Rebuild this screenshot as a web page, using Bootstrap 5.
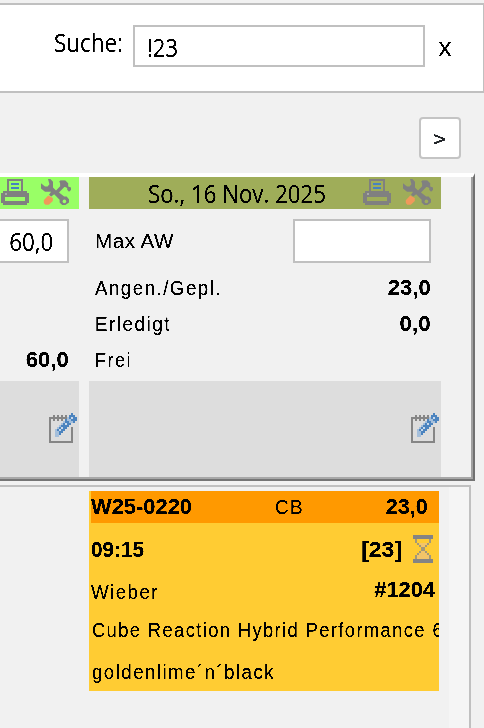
<!DOCTYPE html>
<html lang="de">
<head>
    <meta charset="UTF-8">
    <title>Werkstattplanung</title>
    <link href="https://cdn.jsdelivr.net/npm/bootstrap@5.3.0/dist/css/bootstrap.min.css" rel="stylesheet">
    <style>
        body { width: 484px; height: 728px; overflow: hidden; background: #f1f1f1; color: #000; font: 19.5px "Liberation Sans", sans-serif; }
        .search-bar { height: 90px; margin-top: 3px; background: #fff; border: 2px solid #c0c0c0; border-left: 0; border-right-width: 1px; padding: 20px 30px 0 54px; }
        .search-bar .label-box { width: 79px; }
        .field { background: #fff; border: 2px solid #c0c0c0; white-space: nowrap; }
        .search-field { width: 292px; height: 42px; line-height: 41px; padding-left: 12px; }
        .ui { font-family: "Open Sans", sans-serif; font-size: 25px; }
        .mono { font-family: "Liberation Mono", monospace; font-size: 26px; line-height: 48px; }
        .num { font-size: 22px; font-weight: 700; }
        .fit { display: inline-block; white-space: nowrap; transform-origin: left center; filter: url(#crisp); }
        .fit-end { transform-origin: right center; }
        .pager { height: 80px; padding: 24px 23px 0 0; }
        .next-btn { width: 42px; height: 42px; background: #fff; border: 2px solid #c4c4c4; border-radius: 4px; line-height: 40px; padding: 0; }
        .next-btn .fit { font: 22px/40px "DejaVu Sans Mono", monospace; }
        .planner { width: 475px; height: 308px; border-top: 4px solid #fff; border-right: 2px solid #707070; border-bottom: 2px solid #757575; }
        .planner-in { height: 302px; border-right: 2px solid #a0a0a0; border-bottom: 2px solid #a8a8a8; gap: 10px; }
        .day-prev { width: 79px; }
        .day { width: 352px; }
        .day-head { height: 32px; line-height: 32px; padding: 0 8px 0 1px; }
        .day-head svg { margin-top: 2px; }
        .day-title { width: 273px; padding-left: 58px; }
        .head-green { background: #9f6; color: #9f6; }
        .head-olive { background: #9fad59; color: #9fad59; }
        .head-olive .day-title { color: #000; }
        .aw-row { height: 44px; line-height: 44px; margin: 10px 10px 7px 0; }
        .day-prev .aw-row { line-height: 40px; padding-right: 14px; }
        .day .aw-row, .day .sum-row { padding-left: 6px; }
        .aw-field { width: 138px; }
        .sum-row { height: 36px; line-height: 36px; margin-right: 10px; }
        .notes { height: 96px; margin-top: 3px; background: #ddd; padding: 32px 2px 0 0; }
        .list-pane { width: 471px; height: 243px; margin-top: 4px; border-top: 2px solid #c0c0c0; border-right: 2px solid #c0c0c0; }
        .scroll-track { width: 20px; background: #f5f5f5; }
        .job { width: 350px; height: 200px; margin: 4px 10px 0 89px; background: #fc3; overflow: hidden; padding-left: 2px; }
        .job-head { height: 32px; line-height: 32px; background: #f90; padding-right: 11px; }
        .job-no { width: 184px; }
        .job-time { height: 52px; line-height: 53px; padding-right: 6px; }
        .job-time svg { margin-left: 11px; }
        .job-name { height: 34px; line-height: 35px; padding-right: 4px; }
        .job-name .num { line-height: 29px; }
        .job-line { height: 42px; line-height: 42px; padding-left: 1px; }
        svg { display: block; flex: none; }
    </style>
    <script src="https://cdn.jsdelivr.net/npm/bootstrap@5.3.0/dist/js/bootstrap.bundle.min.js"></script>
</head>
<body>
    <svg width="0" height="0" class="position-absolute">
        <!-- hard glyph edges, no smoothing -->
        <filter id="crisp" x="-5%" y="0" width="110%" height="100%">
            <feComponentTransfer><feFuncA type="linear" slope="6" intercept="-2"/></feComponentTransfer>
        </filter>
        <symbol id="printer" viewBox="0 0 14 13" shape-rendering="crispEdges">
            <path fill="#808080" fill-rule="evenodd" d="M3 0h8v6h2v1h1v5h-1v1H1v-1H0V7h1V6h2zM4 1v5h6V1zM2 9v2h10V9z"/>
            <path fill="#a8a8a8" d="M2 7h1v1H2z"/>
            <path fill="#4682c0" d="M5 2h4v1H5zM5 4h4v1H5z"/>
        </symbol>
        <symbol id="tools" viewBox="0 0 15 13">
            <path fill="#808080" d="M3.5 0h1.2L6 1.4v2.8l1.5 1.5L9.7 3.5V2.3L9 1.2 10 .9h2l1.6 1.6v1.2l1.4.6v1.2l-1 .9-.9-1v-.9l-1.3-.6-2.8 2.8 2.6 2.1h1.2l1.2 1.3v1.7L12.2 13h-1.6L9.3 11.8v-1.4L6.6 7.6 5.1 8.8 4 7.9l1-1.5H2L0 4.7V2.1l2 1.7h1.3l.9-1.2z"/>
            <path fill="#808080" d="M9.5.8h2.7l1.5 1.5-1.2 1.7-2.8-.2z"/>
            <path fill="#f0995a" d="M3.6 8.3 5.9 9.5V11L3.9 12.9H2.2L1.4 12v-1.4z"/>
            <circle cx="11.7" cy="11.2" r=".9" fill="currentColor"/>
        </symbol>
        <symbol id="notepad" viewBox="0 0 14 15" shape-rendering="crispEdges">
            <path fill="#858585" d="M0 2h1v12h10V7h1v8H0zM1 2h8v1H1z"/>
            <path fill="#858585" d="M2 1h1v3H2zM4 1h1v3H4zM6 1h1v3H6zM8 1h1v2H8z"/>
            <path fill="#a5bfdb" d="M3 8h1V7h1V6h1V5h1V4h1V3h1V2h2v1h1v2h-1v1h-1v1H9v1H8v1H7v1H6v1H5v1H3z"/>
            <path fill="#4c84bf" d="M11 0h1v1h1v1h1v2h-1v1h-1V4h-1V3h-1V1h1zM8 3h1v1h1v1h1v1h-1v1H9v1H8v1H7v1H6v1H5V9H4V8h1V7h1V6h1V5h1V4H8z"/>
            <path fill="#c9d9ea" d="M11 2h1v1h-1zM8 5h1v1H8zM6 7h1v1H6zM5 8h1v1H5z"/>
        </symbol>
        <symbol id="hourglass" viewBox="0 0 10 14" shape-rendering="crispEdges">
            <path fill="#f3c568" d="M2 4h6v1H7v1H6v2h1v1h1v3H2V9h1V8h1V6H3V5H2z"/>
            <path fill="#848484" d="M0 0h10v2H0zM0 12h10v2H0z"/>
            <path fill="#a2987a" d="M1 2h1v2H1zM8 2h1v2H8zM2 4h1v1H2zM7 4h1v1H7zM3 5h1v1H3zM6 5h1v1H6zM4 6h1v2H4zM6 6h-1v2h1zM3 8h1v1H3zM6 8h1v1H6zM2 9h1v1H2zM7 9h1v1H7zM1 10h1v2H1zM8 10h1v2H8z"/>
        </symbol>
    </svg>

    <div class="search-bar d-flex">
        <div class="label-box ui"><span class="fit" data-w="69">Suche:</span></div>
        <div class="field search-field ui"><span class="fit" data-w="31">!23</span></div>
        <div class="mono ms-auto"><span class="fit fit-end" data-w="15">x</span></div>
    </div>

    <div class="pager d-flex justify-content-end">
        <button class="next-btn btn"><span class="fit" data-w="13">&gt;</span></button>
    </div>

    <div class="planner">
        <div class="planner-in d-flex">
            <div class="day-prev">
                <div class="day-head head-green d-flex justify-content-between">
                    <svg width="28" height="26"><use href="#printer"/></svg>
                    <svg width="30" height="26"><use href="#tools"/></svg>
                </div>
                <div class="aw-row field ui text-end border-start-0"><span class="fit fit-end" data-w="44">60,0</span></div>
                <div class="sum-row"></div>
                <div class="sum-row"></div>
                <div class="sum-row num text-end"><span class="fit fit-end" data-w="43">60,0</span></div>
                <div class="notes d-flex justify-content-end"><svg width="28" height="30"><use href="#notepad"/></svg></div>
            </div>
            <div class="day">
                <div class="day-head head-olive d-flex">
                    <div class="day-title ui"><span class="fit" data-w="178">So., 16 Nov. 2025</span></div>
                    <svg width="28" height="26"><use href="#printer"/></svg>
                    <svg width="30" height="26" class="ms-auto"><use href="#tools"/></svg>
                </div>
                <div class="aw-row d-flex justify-content-between">
                    <span class="fit" data-w="79" data-ls="0.5">Max AW</span>
                    <div class="field aw-field"></div>
                </div>
                <div class="sum-row d-flex justify-content-between"><span class="fit" data-w="127" data-ls="1.5">Angen./Gepl.</span><span class="num fit fit-end" data-w="43">23,0</span></div>
                <div class="sum-row d-flex justify-content-between"><span class="fit" data-w="76" data-ls="1.5">Erledigt</span><span class="num fit fit-end" data-w="31">0,0</span></div>
                <div class="sum-row"><span class="fit" data-w="37" data-ls="1.5">Frei</span></div>
                <div class="notes d-flex justify-content-end"><svg width="28" height="30"><use href="#notepad"/></svg></div>
            </div>
        </div>
    </div>

    <div class="list-pane d-flex">
        <div class="job">
            <div class="job-head d-flex">
                <div class="job-no num"><span class="fit" data-w="101">W25-0220</span></div>
                <span class="fit" data-w="29" data-ls="1.5">CB</span>
                <span class="num fit fit-end ms-auto" data-w="42">23,0</span>
            </div>
            <div class="job-time num d-flex align-items-center">
                <span class="fit" data-w="53">09:15</span>
                <span class="fit fit-end ms-auto" data-w="41">[23]</span>
                <svg width="20" height="28"><use href="#hourglass"/></svg>
            </div>
            <div class="job-name d-flex justify-content-between">
                <span class="fit" data-w="68" data-ls="1.5">Wieber</span>
                <span class="num fit fit-end" data-w="61">#1204</span>
            </div>
            <div class="job-line"><span class="fit" data-w="352" data-ls="1.5">Cube Reaction Hybrid Performance 6</span></div>
            <div class="job-line"><span class="fit" data-w="183" data-ls="1.5">goldenlime´n´black</span></div>
        </div>
        <div class="scroll-track"></div>
    </div>

    <script>
        document.querySelectorAll(".fit").forEach(el => {
            if (el.dataset.ls) el.style.letterSpacing = el.dataset.ls + "px";
            const w = el.getBoundingClientRect().width;
            el.style.transform = `scaleX(${el.dataset.w / w})`;
        });
    </script>
</body>
</html>
